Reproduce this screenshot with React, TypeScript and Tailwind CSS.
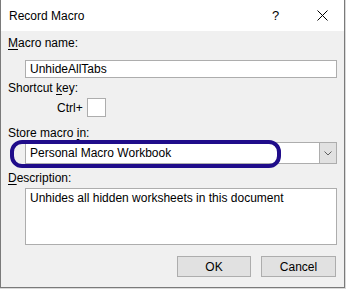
import React from 'react'

const font = "font-['Segoe_UI','Liberation_Sans',Arial,sans-serif]"

function Label({ pre, u, post }: { pre: string; u: string; post: string }) {
  return (
    <div className="h-[16px] leading-[16px] text-[12px] text-black">
      {pre}
      <span className="underline underline-offset-2 decoration-1">{u}</span>
      {post}
    </div>
  )
}

export default function App() {
  return (
    <div className={`w-[346px] h-[289px] bg-[#d9d9d9] ${font}`}>
      <div className="w-[345px] h-[288px] bg-[#f0f0f0] border-x border-b border-[#7a7a7a] flex flex-col">
        {/* title bar */}
        <div className="h-[31px] bg-white flex items-center pl-[8px] text-[12px] text-black">
          <span className="flex-1">Record Macro</span>
          <span className="w-[10px] mr-[35px] text-[13px]">?</span>
          <svg width="11" height="11" viewBox="0 0 11 11" className="mr-[16px]">
            <path d="M0.5 0.5 L10.5 10.5 M10.5 0.5 L0.5 10.5" stroke="#000" strokeWidth="1" />
          </svg>
        </div>

        <div className="relative flex-1 pl-[7px] pr-[7px] pt-[4px]">
          <Label pre="" u="M" post="acro name:" />
          <div className="ml-[17px] mt-[9px] h-[18px] w-[312px] bg-white border border-[#adadad] flex items-center pl-[4px] text-[12px] text-black">
            UnhideAllTabs
          </div>

          <div className="mt-[2px]">
            <Label pre="Shortcut " u="k" post="ey:" />
          </div>
          <div className="mt-[2px] flex items-center">
            <span className="ml-[49px] text-[12px] text-black">Ctrl+</span>
            <div className="ml-[4px] w-[19px] h-[19px] bg-white border border-[#adadad]" />
          </div>

          <div className="mt-[8px]">
            <Label pre="Store macro " u="i" post="n:" />
          </div>
          <div className="ml-[17px] mt-[1px] h-[22px] w-[312px] bg-white border border-[#adadad] flex items-center text-[12px] text-black">
            <span className="flex-1 pl-[4px]">Personal Macro Workbook</span>
            <div className="w-[17px] h-full bg-[#e1e1e1] border-l border-[#adadad] flex items-center justify-center">
              <svg width="8" height="5" viewBox="0 0 8 5">
                <path d="M0.5 0.5 L4 4 L7.5 0.5" fill="none" stroke="#606060" strokeWidth="1" />
              </svg>
            </div>
          </div>

          <div className="mt-[6px]">
            <Label pre="" u="D" post="escription:" />
          </div>
          <div className="ml-[17px] mt-[2px] h-[57px] w-[312px] bg-white border border-[#adadad] pl-[4px] pt-[1px] text-[12px] leading-[16px] text-black">
            Unhides all hidden worksheets in this document
          </div>

          <div className="mt-[11px] flex justify-end gap-[10px] pr-[1px]">
            <button className="w-[74px] h-[21px] bg-[#e1e1e1] border border-[#adadad] text-[12px] text-black">
              OK
            </button>
            <button className="w-[75px] h-[21px] bg-[#e1e1e1] border border-[#adadad] text-[12px] text-black">
              Cancel
            </button>
          </div>

          {/* annotation highlight */}
          <div className="absolute left-[9px] top-[109px] w-[271px] h-[28px] border-[4px] border-[#1f0c8a] rounded-[12px]" />
        </div>
      </div>
    </div>
  )
}
